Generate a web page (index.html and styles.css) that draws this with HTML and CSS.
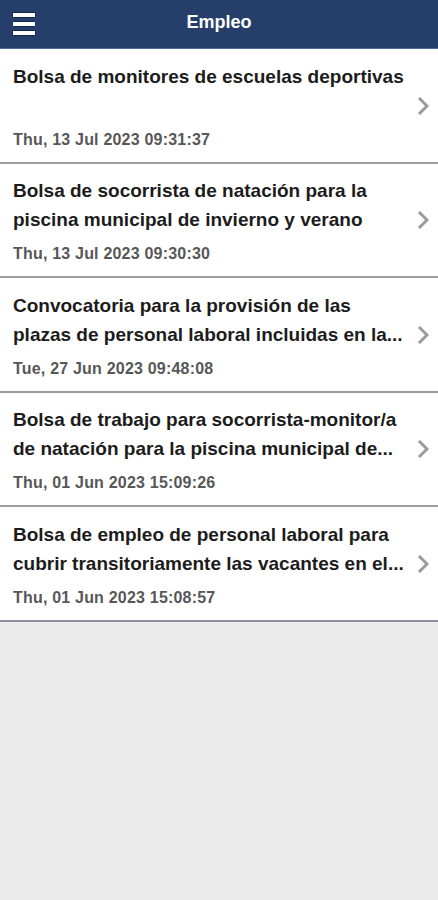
FILE: index.html
```html
<!DOCTYPE html>
<html lang="es">
<head>
  <meta charset="UTF-8" />
  <title>Empleo</title>
  <link rel="stylesheet" href="styles.css">
</head>
<body>

  <header class="topbar">
    <button class="menu-btn" aria-label="Menú">
      <span></span><span></span><span></span>
    </button>
    <h1>Empleo</h1>
  </header>

  <ul class="news-list">
    <li class="news-item">
      <div class="news-body">
        <div class="news-title">Bolsa de monitores de escuelas deportivas</div>
        <div class="news-date">Thu, 13 Jul 2023 09:31:37</div>
      </div>
      <svg class="chevron" viewBox="0 0 12 20"><path d="M2 2 L10 10 L2 18" /></svg>
    </li>
    <li class="news-item">
      <div class="news-body">
        <div class="news-title">Bolsa de socorrista de natación para la piscina municipal de invierno y verano</div>
        <div class="news-date">Thu, 13 Jul 2023 09:30:30</div>
      </div>
      <svg class="chevron" viewBox="0 0 12 20"><path d="M2 2 L10 10 L2 18" /></svg>
    </li>
    <li class="news-item">
      <div class="news-body">
        <div class="news-title">Convocatoria para la provisión de las plazas de personal laboral incluidas en la...</div>
        <div class="news-date">Tue, 27 Jun 2023 09:48:08</div>
      </div>
      <svg class="chevron" viewBox="0 0 12 20"><path d="M2 2 L10 10 L2 18" /></svg>
    </li>
    <li class="news-item">
      <div class="news-body">
        <div class="news-title">Bolsa de trabajo para socorrista-monitor/a de natación para la piscina municipal de...</div>
        <div class="news-date">Thu, 01 Jun 2023 15:09:26</div>
      </div>
      <svg class="chevron" viewBox="0 0 12 20"><path d="M2 2 L10 10 L2 18" /></svg>
    </li>
    <li class="news-item">
      <div class="news-body">
        <div class="news-title">Bolsa de empleo de personal laboral para cubrir transitoriamente las vacantes en el...</div>
        <div class="news-date">Thu, 01 Jun 2023 15:08:57</div>
      </div>
      <svg class="chevron" viewBox="0 0 12 20"><path d="M2 2 L10 10 L2 18" /></svg>
    </li>
  </ul>

</body>
</html>
```

FILE: styles.css
```css
body {
  margin: 0;
  font-family: "Liberation Sans", Arial, sans-serif;
  background: #ebebeb;
  min-height: 900px;
}
.topbar {
  height: 48px;
  background: #253f6a;
  border-bottom: 1px solid #4d6a96;
  display: flex;
  align-items: center;
  justify-content: center;
  position: relative;
}
.topbar h1 {
  margin: 0;
  color: white;
  font-size: 18px;
  font-weight: bold;
  margin-top: -4px;
}
.menu-btn {
  position: absolute;
  left: 12px;
  top: 12px;
  width: 24px;
  padding: 0;
  border: none;
  background: none;
  display: flex;
  flex-direction: column;
  gap: 3px;
}
.menu-btn span {
  display: block;
  height: 4px;
  background: white;
  border: 1px solid #16284a;
  border-radius: 1px;
}
.news-list {
  list-style: none;
  margin: 0;
  padding: 0;
  background: white;
}
.news-item {
  display: flex;
  align-items: center;
  padding: 12.5px 9px 12px 13px;
  border-bottom: 2px solid #9c9ca6;
}
.news-item:last-child {
  border-bottom-color: #8c8ca2;
}
.news-body {
  flex: 1;
  min-width: 0;
}
.news-title {
  font-size: 19px;
  font-weight: bold;
  color: #1c1c1c;
  line-height: 29px;
  height: 58px;
  display: -webkit-box;
  -webkit-line-clamp: 2;
  -webkit-box-orient: vertical;
  overflow: hidden;
}
.news-date {
  margin-top: 10px;
  font-size: 16px;
  letter-spacing: 0.2px;
  font-weight: bold;
  color: #575757;
  line-height: 20px;
}
.chevron {
  width: 12px;
  height: 20px;
  margin-left: 4px;
  flex: none;
  fill: none;
  stroke: #9a9a9a;
  stroke-width: 3;
}
```
